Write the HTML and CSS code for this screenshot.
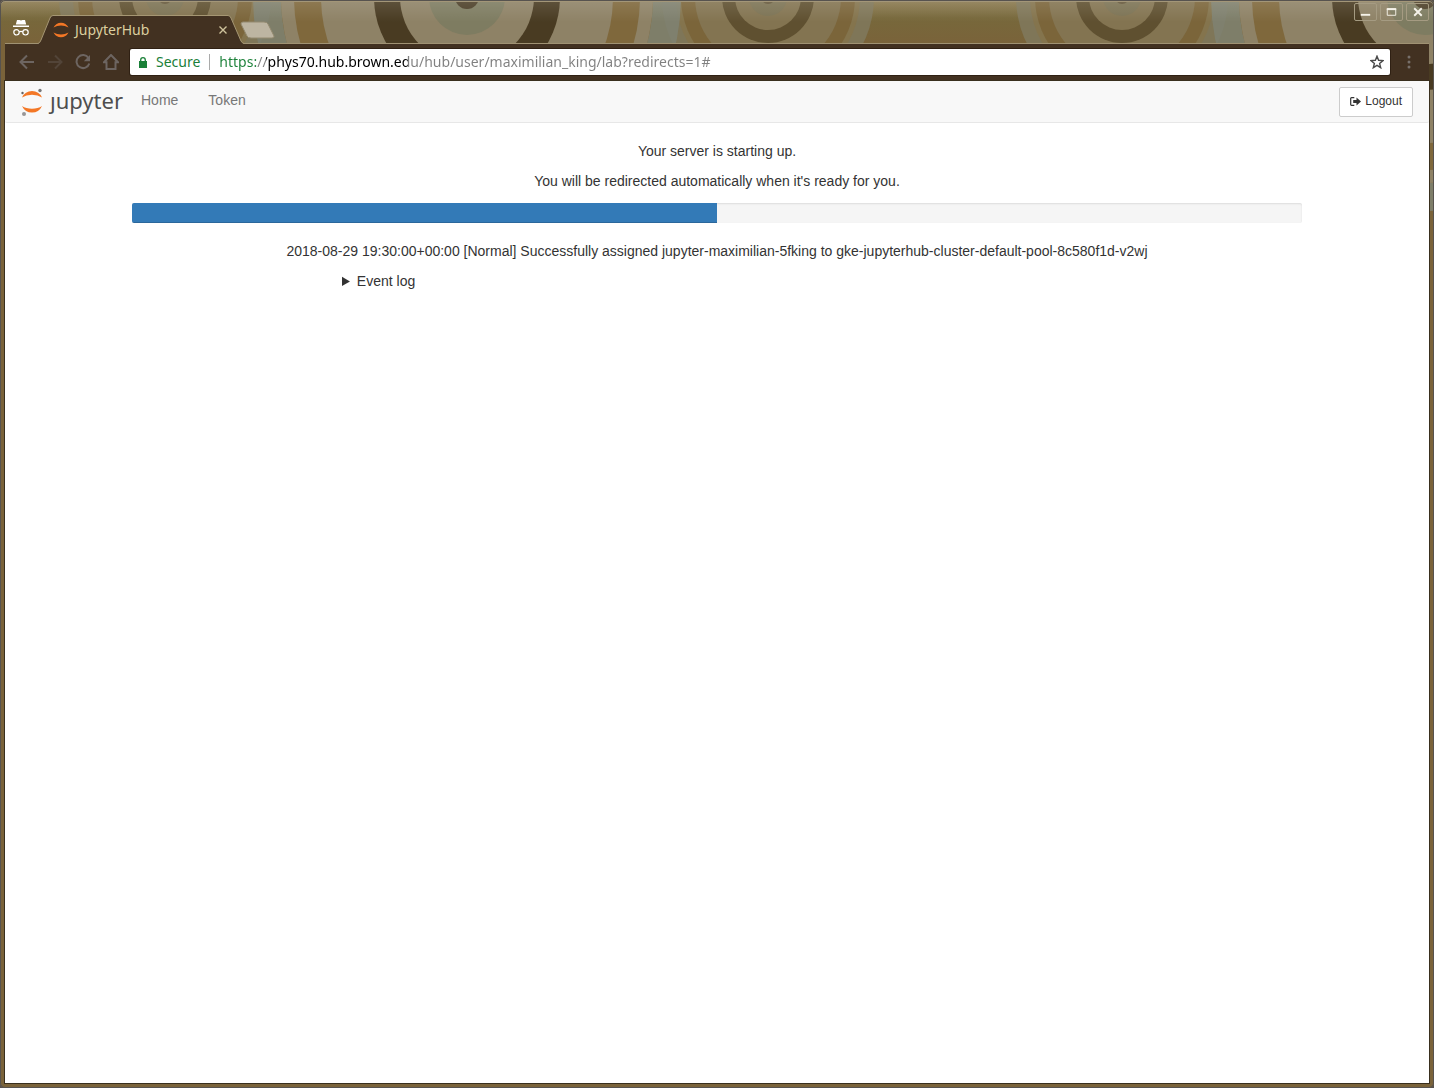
FILE: index.html
```html
<!DOCTYPE html>
<html lang="en">
<head>
<meta charset="utf-8">
<title>JupyterHub</title>
<link rel="stylesheet" href="styles.css">
</head>
<body>
<svg class="wallpaper" aria-hidden="true">
  <defs>
    <linearGradient id="base" x1="0" y1="0" x2="0" y2="44" gradientUnits="userSpaceOnUse">
      <stop offset="0" stop-color="#8b7a50"/>
      <stop offset=".4" stop-color="#77683b"/>
      <stop offset="1" stop-color="#7a633a"/>
    </linearGradient>
    <linearGradient id="shine" x1="0" y1="0" x2="0" y2="1">
      <stop offset="0" stop-color="#fff" stop-opacity=".12"/>
      <stop offset="1" stop-color="#fff" stop-opacity="0"/>
    </linearGradient>
    <g id="medium">
      <circle r="106" fill="#7f7658"/>
      <circle r="92" fill="#84744d"/>
      <circle r="87" fill="#7b653a"/>
      <circle r="73" fill="#837451"/>
      <circle r="46" fill="#5f5030"/>
      <circle r="33" fill="#837451"/>
      <circle r="19" fill="#7c7354"/>
      <circle r="7" fill="#65573a"/>
    </g>
    <g id="large">
      <circle r="200" fill="none" stroke="#7f8272" stroke-opacity=".85" stroke-width="28"/>
      <circle r="186" fill="#8e8266"/>
      <circle r="173" fill="#7f683c"/>
      <circle r="146" fill="#8e8266"/>
      <circle r="93" fill="#493b22"/>
      <circle r="67" fill="#8e8266"/>
      <circle r="38" fill="#7e7c61"/>
      <circle r="12" fill="#4d4029"/>
    </g>
  </defs>
  <rect width="100%" height="100%" fill="url(#base)"/>
  <use href="#medium" x="165" y="-3"/>
  <use href="#medium" x="768" y="-3"/>
  <use href="#medium" x="1122" y="-3"/>
  <use href="#large" x="467" y="-3"/>
  <use href="#large" x="1425" y="-3"/>
  <rect width="100%" height="22" fill="url(#shine)"/>
</svg>
<div class="window">
  <header class="titlebar">
    <svg class="incognito" viewBox="0 0 18 18" aria-label="Incognito">
      <path d="M5 1h2.500l1.500.6L10.500 1H13l1.200 4.500H3.800zM1 6.500h16v1.500H1z" fill="#fff"/>
      <g fill="none" stroke="#fff" stroke-width="1.200"><circle cx="4.500" cy="13.300" r="2.700"/><circle cx="13.500" cy="13.300" r="2.700"/><path d="M7.200 13q1.800-1.200 3.600 0"/></g>
    </svg>
    <div class="tab">
      <svg class="tab-shape" viewBox="0 0 206 29" aria-hidden="true">
        <path d="M0 29L1 28Q2 27 3 25L12 3Q13 .5 15 .5H190Q192 .5 193 3L203 26Q204 28 206 29z" fill="#423121"/>
        <path d="M0 28.500Q2 28 3 25L12 3Q13 .5 15 .5H190Q192 .5 193 3L203 26Q204 28 206 28.500" fill="none" stroke="#a59673"/>
      </svg>
      <svg class="favicon" viewBox="0 0 16 16" aria-hidden="true"><path d="M.5 5.500Q3 .8 8 .8T15.500 5.500Q12 3.500 8 3.500T.5 5.500zM.5 10.500Q4 12.500 8 12.500T15.500 10.500Q13 15.200 8 15.200T.5 10.500z" fill="#f37726"/></svg>
      <span class="tab-title">JupyterHub</span>
      <button class="tab-close" aria-label="Close tab"><svg viewBox="0 0 8 8"><path d="M.5.5l7 7M7.500.5l-7 7" stroke="#cfc39c" stroke-width="1.400"/></svg></button>
    </div>
    <button class="new-tab" aria-label="New tab"><svg viewBox="0 0 36 18"><path d="M3 1H24Q27 1 28 3L34 15Q34.500 17 32 17H11Q8 17 7 15L1 3Q.8 1 3 1z" fill="#bdb5a2" stroke="#948a70"/></svg></button>
    <div class="window-buttons">
      <button aria-label="Minimize"><svg viewBox="0 0 22 17"><path d="M6 10.500h10v2H6z" fill="#f5f2e9"/></svg></button>
      <button aria-label="Maximize"><svg viewBox="0 0 22 17"><path d="M6.500 5h9v7h-9z" fill="none" stroke="#f5f2e9"/><path d="M6 4.500h10v2H6z" fill="#f5f2e9"/></svg></button>
      <button aria-label="Close window"><svg viewBox="0 0 22 17"><path d="M7.500 4.500l8 8M15.500 4.500l-8 8" stroke="#f5f2e9" stroke-width="2"/></svg></button>
    </div>
  </header>
  <div class="toolbar">
    <button class="tool" aria-label="Back"><svg viewBox="0 0 16 16"><path d="M15 8H2M8 1.500L1.500 8L8 14.500" stroke="#6d6561"/></svg></button>
    <button class="tool" aria-label="Forward"><svg viewBox="0 0 16 16"><path d="M1 8h13M8 1.500L14.500 8L8 14.500" stroke="#524438"/></svg></button>
    <button class="tool" aria-label="Reload"><svg viewBox="0 0 16 16"><path d="M13.500 4A6.500 6.500 0 1 0 14.300 9.500" stroke="#6d6561"/><path d="M15 1v6.200H8.800z" fill="#6d6561" stroke="none"/></svg></button>
    <button class="tool" aria-label="Home page"><svg viewBox="0 0 16 16"><path d="M8 1L1 8.200H3.500V15H12.500V8.200H15z" stroke="#6d6561"/></svg></button>
    <div class="omnibox">
      <svg class="lock" viewBox="0 0 8 11" aria-hidden="true"><path d="M0 4h8v7H0z" fill="#1a8038"/><path d="M1.700 4.500V3a2.300 2.300 0 0 1 4.600 0v1.500" fill="none" stroke="#1a8038" stroke-width="1.300"/></svg>
      <span class="secure">Secure</span>
      <input class="address" type="text" aria-label="Address" value="https://phys70.hub.brown.edu/hub/user/maximilian_king/lab?redirects=1#">
      <button class="star" aria-label="Bookmark this page"><svg viewBox="0 0 14 14"><path d="M7 1.200L8.600 5.300L13 5.600L9.600 8.400L10.700 12.700L7 10.300L3.300 12.700L4.400 8.400L1 5.600L5.400 5.300z" fill="none" stroke="#4a4a4a" stroke-width="1.400"/></svg></button>
    </div>
    <button class="menu" aria-label="Menu"><svg viewBox="0 0 4 14"><g fill="#77706b"><circle cx="2" cy="2" r="1.500"/><circle cx="2" cy="7" r="1.500"/><circle cx="2" cy="12" r="1.500"/></g></svg></button>
  </div>
  <div class="page">
    <nav class="navbar">
      <a class="logo" href="#" aria-label="Jupyter">
        <svg viewBox="0 0 22 28" aria-hidden="true"><path d="M1 9.500Q4 3 11 3T21 9.500Q17 6.800 11 6.800T1 9.500zM1 18Q5 20.800 11 20.800T21 18Q18 24.600 11 24.600T1 18z" fill="#f37726"/><circle cx="1.500" cy="5" r="1.200" fill="#616262"/><circle cx="19" cy="2.500" r="1.700" fill="#767677"/><circle cx="3" cy="26" r="2" fill="#989798"/></svg>
        <span class="wordmark">ȷupyter</span>
      </a>
      <a class="nav-link" href="#">Home</a>
      <a class="nav-link" href="#">Token</a>
      <a class="logout" href="#"><svg viewBox="0 0 11 9" aria-hidden="true"><path d="M4.300.7H1.500Q.7.700.7 1.500V7.500Q.7 8.300 1.500 8.300H4.300" fill="none" stroke="#333" stroke-width="1.200"/><path d="M3.200 3h3.300V.5L11 4.500L6.500 8.500V6H3.200z" fill="#333"/></svg>Logout</a>
    </nav>
    <main class="container">
      <p>Your server is starting up.</p>
      <p>You will be redirected automatically when it's ready for you.</p>
      <div class="progress" role="progressbar" aria-label="Server startup" aria-valuenow="50" aria-valuemin="0" aria-valuemax="100"><div class="bar" style="width: 50%"></div></div>
      <p>2018-08-29 19:30:00+00:00 [Normal] Successfully assigned jupyter-maximilian-5fking to gke-jupyterhub-cluster-default-pool-8c580f1d-v2wj</p>
      <details class="events"><summary>Event log</summary></details>
    </main>
  </div>
</div>
</body>
</html>
```
FILE: styles.css
```css
* { box-sizing: border-box; }

body {
  margin: 0;
  background: #55504e;
  font-family: "Liberation Sans", Arial, sans-serif;
  font-size: 14px;
  line-height: 20px;
  color: #333;
}

svg { display: block; }

button {
  padding: 0;
  border: 0;
  background: none;
  flex: none;
}

.wallpaper {
  position: absolute;
  inset: 0;
  width: 100%;
  height: 100%;
  border-radius: 5px;
}

.window {
  position: relative;
  display: flex;
  flex-direction: column;
  min-height: 100vh;
  padding: 0 4px 4px;
  border: 1px solid #57534f;
  border-radius: 5px;
  box-shadow: inset 0 1px #a39678;
}

/* title bar */
.titlebar {
  display: flex;
  align-items: flex-end;
  height: 43px;
  border-bottom: 1px solid #a09273;
}

.incognito {
  width: 18px;
  height: 18px;
  margin: 0 8px 6px 7px;
  flex: none;
}

.tab {
  position: relative;
  display: flex;
  align-items: center;
  width: 206px;
  height: 29px;
  margin-bottom: -1px;
  padding: 0 17px 0 15px;
  flex: none;
}

.tab-shape {
  position: absolute;
  inset: 0;
  width: 206px;
  height: 29px;
}

.favicon {
  position: relative;
  width: 16px;
  height: 16px;
}

.tab-title {
  position: relative;
  flex: 1;
  padding-left: 6px;
  font: 14px/20px "Noto Sans", sans-serif;
  color: #dccf9f;
}

.tab-close {
  position: relative;
}

.tab-close svg {
  width: 8px;
  height: 8px;
}

.new-tab {
  margin: 0 auto 4px -4px;
}

.new-tab svg {
  width: 36px;
  height: 18px;
}

.window-buttons {
  display: flex;
  align-self: flex-start;
  gap: 3px;
  margin-top: 2px;
}

.window-buttons button {
  border: 1px solid #a59b82;
  border-radius: 2px;
}

.window-buttons svg {
  width: 21px;
  height: 16px;
}

/* toolbar */
.toolbar {
  display: flex;
  align-items: center;
  height: 37px;
  padding: 0 18px 0 14px;
  background: #423121;
  border-bottom: 1px solid #2c1d10;
}

.tool {
  margin-right: 12px;
}

.tool svg {
  width: 16px;
  height: 16px;
  fill: none;
  stroke-width: 2;
}

.omnibox {
  display: flex;
  align-items: center;
  flex: 1;
  height: 26px;
  margin: 0 17px 0 -1px;
  padding: 0 6px 0 9px;
  background: #fff;
  border-radius: 2px;
  box-shadow: 0 0 0 1px #2f2013;
}

.lock {
  width: 8px;
  height: 11px;
}

.secure {
  margin-left: 9px;
  padding-right: 9px;
  border-right: 1px solid #aaa;
  font: 14px/16px "Noto Sans", sans-serif;
  color: #1a8038;
}

.address {
  flex: 1;
  min-width: 0;
  height: 20px;
  margin-left: 9px;
  padding: 0;
  border: 0;
  outline: 0;
  font: 14px/20px "Noto Sans", sans-serif;
  color: transparent;
  /* scheme, host and path each take their own colour */
  background: linear-gradient(90deg, #1a8038 0 37px, #808080 37px 47px, #000 47px 189px, #808080 189px);
  -webkit-background-clip: text;
  background-clip: text;
}

.star svg {
  width: 14px;
  height: 14px;
}

.menu svg {
  width: 4px;
  height: 14px;
}

/* JupyterHub page */
.page {
  flex: 1;
  background: #fff;
  box-shadow: 0 0 0 1px #392f1e;
}

.navbar {
  display: flex;
  align-items: flex-start;
  height: 42px;
  padding: 0 16px 0 15px;
  background: #f8f8f8;
  border-bottom: 1px solid #e7e7e7;
  border-radius: 2px;
}

.logo {
  display: flex;
  width: 105px;
  margin: 7px 0 0 1px;
  text-decoration: none;
}

.logo svg {
  width: 22px;
  height: 28px;
  flex: none;
}

.wordmark {
  margin-left: 7px;
  font: 22px/24px "Noto Sans", sans-serif;
  color: #4e4e4e;
}

.nav-link {
  padding: 9px 15px;
  color: #777;
  text-decoration: none;
}

.nav-link + .nav-link {
  margin-right: auto;
}

.logout {
  display: flex;
  align-items: center;
  gap: 4px;
  height: 30px;
  margin-top: 6px;
  padding: 0 10px 2px;
  border: 1px solid #ccc;
  border-radius: 2px;
  background: #fff;
  font-size: 12px;
  color: #333;
  text-decoration: none;
}

.logout svg {
  width: 11px;
  height: 9px;
}

.container {
  max-width: 1170px;
  margin: 18px auto 0;
}

p {
  margin: 0 0 10px;
  text-align: center;
}

.progress {
  height: 20px;
  margin: 12px 0 18px;
  border-radius: 2px;
  background: #f5f5f5;
  box-shadow: inset 0 1px 2px rgba(0, 0, 0, .1);
  overflow: hidden;
}

.bar {
  height: 100%;
  background: #337ab7;
  box-shadow: inset 0 -1px rgba(0, 0, 0, .15);
}

.events {
  padding-left: 210px;
}
```
